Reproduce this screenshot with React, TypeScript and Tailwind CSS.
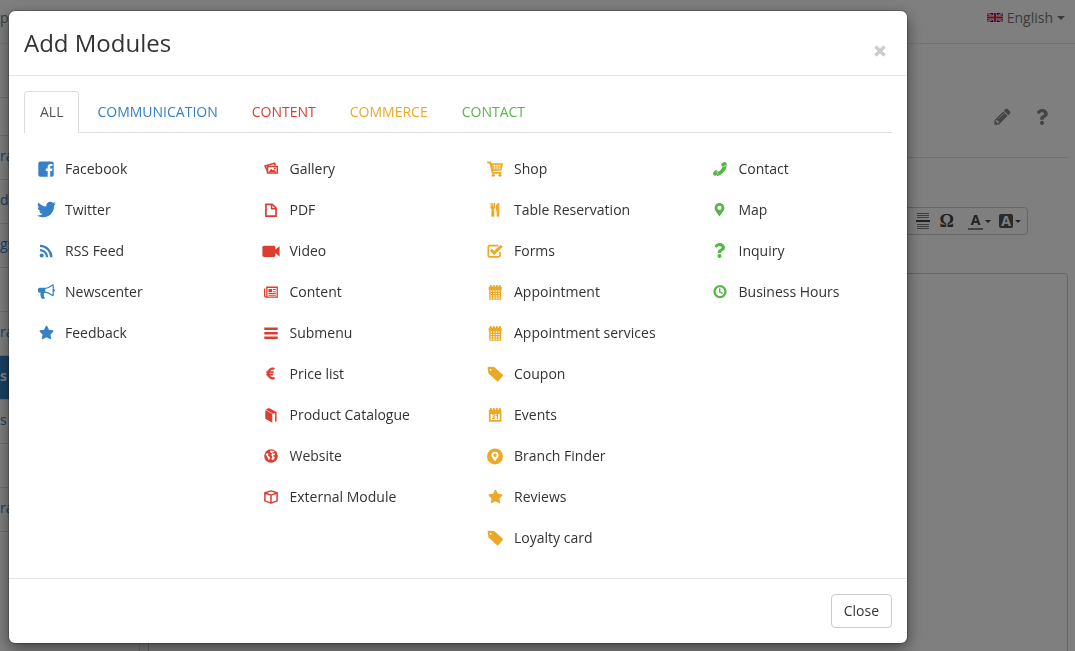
import type { ReactNode } from "react";
import { FaEuroSign, FaMapMarkerAlt, FaQuestion, FaStar, FaTwitter } from "react-icons/fa";

function Glyph({ children }: { children: ReactNode }) {
  return (
    <svg viewBox="0 0 20 20" className="h-5 w-5" fill="currentColor" aria-hidden="true">
      {children}
    </svg>
  );
}

const FacebookIcon = () => (
  <Glyph>
    <path d="M4.3 2.400h11.400a2 2 0 0 1 2 2v11.400a2 2 0 0 1-2 2h-1.500v-5.900h1.900l.3-2.300h-2.200V8.200c0-.7.3-1.100 1-1.100h1.300V5h-1.900c-1.900 0-2.900 1.100-2.900 2.900v1.700H9.800v2.300h1.900v5.900H4.300a2 2 0 0 1-2-2V4.400a2 2 0 0 1 2-2z" />
  </Glyph>
);

const RssIcon = () => (
  <Glyph>
    <circle cx="5.700" cy="14.600" r="2" />
    <path d="M4 9.100a7.200 7.200 0 0 1 7.100 7.200M4 4.900a11.400 11.400 0 0 1 11.300 11.400" fill="none" stroke="currentColor" strokeWidth="2.300" />
  </Glyph>
);

const BullhornIcon = () => (
  <svg viewBox="0 0 1792 1792" className="h-[17px] w-[17px]" fill="currentColor" aria-hidden="true">
    <path d="M1664 640q53 0 90.5 37.5t37.5 90.5-37.5 90.5-90.5 37.5v384q0 52-38 90t-90 38q-417-347-812-380-58 19-91 66t-31 100.5 40 92.5q-20 33-23 65.5t6 58 33.5 55 48 50 61.5 50.5q-29 58-111.5 83t-168.5 11.5-132-55.5q-7-23-29.5-87.5t-32-94.5-23-89-15-101 3.5-98.5 22-110.5h-122q-66 0-113-47t-47-113v-192q0-66 47-113t113-47h480q435 0 896-384 52 0 90 38t38 90v384zm-128 604v-954q-394 302-768 343v270q377 42 768 341z" />
  </svg>
);

const PencilIcon = () => (
  <svg viewBox="0 0 1792 1792" className="h-[19px] w-[19px]" fill="currentColor" aria-hidden="true">
    <path d="M491 1536l91-91-235-235-91 91v107h128v128h107zm523-928q0-22-22-22-10 0-17 7l-542 542q-7 7-7 17 0 22 22 22 10 0 17-7l542-542q7-7 7-17zm-54-192l416 416-832 832h-416v-416zm683 96q0 53-37 90l-166 166-416-416 166-165q36-38 90-38 53 0 91 38l235 234q37 39 37 91z" />
  </svg>
);

const GalleryIcon = () => (
  <Glyph>
    <path d="M3 6.500 14 3.200l1.200 3.300h-2l-.4-1.200-7.600 2.300L6.500 11v3.300z" />
    <path fillRule="evenodd" d="M5.800 6.700h11.200v8H5.800zM7.300 8.200v5.100h8.200V8.200z" />
    <path d="m7.500 13.200 2.700-3.500 1.700 1.900 1-1 2.500 2.600z" />
    <circle cx="13.800" cy="9.500" r="1" />
  </Glyph>
);

const FileIcon = () => (
  <Glyph>
    <path fillRule="evenodd" d="M4.100 3.500h7.400l4.400 4.300v9.100H4.100zm1.700 1.700v10h8.400V9.500h-4.400V5.200zm5.500.3v2.600h2.600z" />
  </Glyph>
);

const VideoIcon = () => (
  <Glyph>
    <rect x="1.400" y="4.700" width="13" height="11.200" rx="1.600" />
    <path d="M14 8.800 18.600 5.200v10.300L14 12z" />
  </Glyph>
);

const NewsIcon = () => (
  <Glyph>
    <path fillRule="evenodd" d="M5.200 4.600h11.700V15.700H4.700A1.700 1.700 0 0 1 3 14V6.600h1.300v7.300c0 .9.900.9.900 0zm1.300 1.300v8.500h9.100V5.900z" />
    <path d="M7.400 7h3.800v3.300H7.400zM12 7h2.800v1.100H12zM12 9.200h2.800v1.100H12zM7.400 11.100h7.400v1H7.400zM7.400 12.800h7.400v.9H7.400z" />
  </Glyph>
);

const MenuIcon = () => (
  <Glyph>
    <path d="M3.300 4.500h13.400v2.400H3.300zM3.300 9h13.400v2.400H3.300zM3.300 13.500h13.400v2.400H3.300z" />
  </Glyph>
);

const CatalogueIcon = () => (
  <Glyph>
    <path d="M4.300 5 11.300 8.800v9L4.300 13.700z" />
    <path d="M4.800 4.400 7.900 2.900l7.700 4v9.200l-1.500.9V8l-2.200.8z" />
  </Glyph>
);

const GlobeIcon = () => (
  <Glyph>
    <circle cx="10" cy="10" r="6.800" />
    <path d="m4.700 8.300 1.700-1.200 1.100 1.100-.4 1.500 1.600 1.100.3 2-1.300 1.300-.9-2.100zM9.300 4.600l4.200.3-.8 1.300h-1.500l.2 1.300h2.800l-.6 1.700h-1.500l.2 1.300 1.500.6-.6 2-1.800 1.200-1-1.300.9-2.500-1-1.400.8-1.700-1.900-1.200z" fill="#fff" />
  </Glyph>
);

const BoxIcon = () => (
  <Glyph>
    <path
      d="M10 3.900 16.100 5.700v8.200L10 16.100l-6.100-2.200V5.700zM4 6l6 2.100L16 6M10 8.100V16"
      fill="none"
      stroke="currentColor"
      strokeWidth="1.500"
      strokeLinejoin="round"
    />
  </Glyph>
);

const CartIcon = () => (
  <Glyph>
    <path d="M2.200 2.500h3.500l.8 1.700H18.200l-1.800 7.300-8.300.5.300 1h8.200v1.800H6.900L4.500 4.400H2.200z" />
    <circle cx="8.200" cy="16.200" r="1.500" />
    <circle cx="15" cy="16.200" r="1.500" />
    <path d="M7.200 6.700h9.300M7.600 9h8.300M9.500 5.500v5M12 5.500v5M14.400 5.500v5" stroke="#fff" strokeWidth=".6" />
  </Glyph>
);

const CutleryIcon = () => (
  <Glyph>
    <path d="M5.500 3h1.200v3.200h.5V3h1.100v3.200h.5V3H10v4.400c0 .9-.4 1.500-1 1.800l.4 6.300c0 .9-.6 1.400-1.600 1.400s-1.600-.5-1.600-1.400l.4-6.300c-.7-.3-1.100-.9-1.100-1.800zM10.900 6.300C10.900 4.300 12.200 3 14.300 3v12.500c0 .9-.5 1.400-1.300 1.400s-1.400-.5-1.400-1.400v-5h-.7z" />
  </Glyph>
);

const CheckIcon = () => (
  <Glyph>
    <path d="M15 11v3.500a1.300 1.300 0 0 1-1.300 1.300H4.600a1.300 1.300 0 0 1-1.300-1.300V5.900a1.300 1.300 0 0 1 1.300-1.300h8.800" fill="none" stroke="currentColor" strokeWidth="1.700" />
    <path d="m5.900 8.700 3.300 3.300 7.400-7.200" fill="none" stroke="currentColor" strokeWidth="3" />
  </Glyph>
);

const CalendarIcon = () => (
  <Glyph>
    <path d="M3.700 4.700h13v3.200h-13zM4.200 7h12v10.700h-12z" />
    <path d="M4.700 4a1.100 1.100 0 0 1 2.200 0v1.200H4.700zM7.700 4a1.100 1.100 0 0 1 2.200 0v1.200H7.700zM10.700 4a1.100 1.100 0 0 1 2.200 0v1.200h-2.200zM13.700 4a1.100 1.100 0 0 1 2.200 0v1.200h-2.200z" />
    <path
      d="M5.500 9.200h9.500M5.500 11.500h9.500M5.500 13.800h9.500M5.500 16.200h9.500"
      stroke="#fff"
      strokeWidth="1.200"
      strokeDasharray="1.500 1.100"
    />
  </Glyph>
);

const EventsIcon = () => (
  <Glyph>
    <path fillRule="evenodd" d="M3.900 4.700h12.500v12H3.900zm1.700 4.400v5.900h9.100V9.100z" />
    <path d="M4.800 3.800a1 1 0 0 1 2 0v1.400h-2zM7.800 3.800a1 1 0 0 1 2 0v1.400h-2zM10.800 3.800a1 1 0 0 1 2 0v1.400h-2zM13.800 3.800a1 1 0 0 1 2 0v1.400h-2z" />
    <text x="10.200" y="14.300" textAnchor="middle" fontSize="6" fontWeight="800">
      31
    </text>
  </Glyph>
);

const TagIcon = () => (
  <Glyph>
    <path fillRule="evenodd" d="M2.600 3.900c0-.8.5-1.200 1.200-1.200l5.500.4 8.300 7.500c.5.4.5 1 .1 1.500l-4.200 5c-.4.500-1 .5-1.500.1L3.500 9.400zm3 1a.9.9 0 1 0 0 1.800.9.9 0 0 0 0-1.800z" />
  </Glyph>
);

const BranchIcon = () => (
  <Glyph>
    <circle cx="10" cy="10.400" r="8" />
    <path fillRule="evenodd" d="M10 5.700a3.500 3.500 0 0 1 3.500 3.500c0 2-2.100 3.700-3.500 6.100-1.400-2.400-3.500-4.100-3.500-6.100A3.500 3.500 0 0 1 10 5.700zm0 1.800a1.700 1.700 0 1 0 0 3.400 1.700 1.700 0 0 0 0-3.400z" fill="#fff" />
  </Glyph>
);

const PhoneIcon = () => (
  <Glyph>
    <path d="M14.700 6.500c-.2 4-3.700 7.800-8 8.700" fill="none" stroke="currentColor" strokeWidth="4" />
    <ellipse cx="14" cy="5.400" rx="2.800" ry="2.100" transform="rotate(-25 14 5.400)" />
    <ellipse cx="5.500" cy="13.900" rx="2.800" ry="2.100" transform="rotate(115 5.500 13.900)" />
    <path d="m12.400 8 3.600-1.500M6.800 12l1.300 3.300" stroke="#fff" strokeWidth=".5" />
  </Glyph>
);

const ClockIcon = () => (
  <Glyph>
    <circle cx="10" cy="9.600" r="5.500" fill="none" stroke="currentColor" strokeWidth="2.300" />
    <path d="M9.700 6.200v3.900l3 1.200" fill="none" stroke="currentColor" strokeWidth="1.400" />
  </Glyph>
);

const CloseIcon = () => (
  <svg viewBox="0 0 12 12" className="h-3 w-3" aria-hidden="true">
    <path d="m1.500 1.500 9 9M10.500 1.500l-9 9" stroke="currentColor" strokeWidth="3.200" />
  </svg>
);

const Caret = ({ className }: { className: string }) => (
  <svg viewBox="0 0 8 4" className={className} fill="currentColor" aria-hidden="true">
    <path d="M0 0h8L4 4z" />
  </svg>
);

const FlagIcon = () => (
  <svg viewBox="0 0 16 9" className="h-[9px] w-4" aria-hidden="true">
    <path fill="#1a1a90" d="M0 0h16v9H0z" />
    <path d="m0 0 16 9M16 0 0 9" stroke="#fff" strokeWidth="2" />
    <path d="m0 0 16 9M16 0 0 9" stroke="#e01838" strokeWidth=".7" />
    <path d="M8 0v9M0 4.500h16" stroke="#fff" strokeWidth="3.400" />
    <path d="M8 0v9M0 4.500h16" stroke="#e01838" strokeWidth="2" />
  </svg>
);

const tabs = [
  { name: "COMMUNICATION", color: "text-[#3580c6]" },
  { name: "CONTENT", color: "text-[#dc3d31]" },
  { name: "COMMERCE", color: "text-[#eca927]" },
  { name: "CONTACT", color: "text-[#56b647]" },
];

const columns = [
  {
    color: "text-[#3580c6]",
    modules: [
      { name: "Facebook", icon: <FacebookIcon /> },
      { name: "Twitter", icon: <FaTwitter size={19} /> },
      { name: "RSS Feed", icon: <RssIcon /> },
      { name: "Newscenter", icon: <BullhornIcon /> },
      { name: "Feedback", icon: <FaStar size={15} /> },
    ],
  },
  {
    color: "text-[#dc3d31]",
    modules: [
      { name: "Gallery", icon: <GalleryIcon /> },
      { name: "PDF", icon: <FileIcon /> },
      { name: "Video", icon: <VideoIcon /> },
      { name: "Content", icon: <NewsIcon /> },
      { name: "Submenu", icon: <MenuIcon /> },
      { name: "Price list", icon: <FaEuroSign size={13} stroke="currentColor" strokeWidth={24} /> },
      { name: "Product Catalogue", icon: <CatalogueIcon /> },
      { name: "Website", icon: <GlobeIcon /> },
      { name: "External Module", icon: <BoxIcon /> },
    ],
  },
  {
    color: "text-[#eca927]",
    modules: [
      { name: "Shop", icon: <CartIcon /> },
      { name: "Table Reservation", icon: <CutleryIcon /> },
      { name: "Forms", icon: <CheckIcon /> },
      { name: "Appointment", icon: <CalendarIcon /> },
      { name: "Appointment services", icon: <CalendarIcon /> },
      { name: "Coupon", icon: <TagIcon /> },
      { name: "Events", icon: <EventsIcon /> },
      { name: "Branch Finder", icon: <BranchIcon /> },
      { name: "Reviews", icon: <FaStar size={15} /> },
      { name: "Loyalty card", icon: <TagIcon /> },
    ],
  },
  {
    color: "text-[#56b647]",
    modules: [
      { name: "Contact", icon: <PhoneIcon /> },
      { name: "Map", icon: <FaMapMarkerAlt size={13} /> },
      { name: "Inquiry", icon: <FaQuestion size={15} /> },
      { name: "Business Hours", icon: <ClockIcon /> },
    ],
  },
];

const sidebarItems = ["ra", "d", "gs", "", "ra", "s", "s", "", "ra"];

function Page() {
  return (
    <div className="flex h-screen flex-col overflow-hidden bg-white text-[#777]">
      <header className="flex h-11 shrink-0 items-center justify-between border-b border-[#e7e7e7] pr-2.5 pb-2">
        <span>pp</span>
        <button type="button" className="flex items-center gap-1">
          <FlagIcon />
          English
          <Caret className="h-1 w-2" />
        </button>
      </header>

      <div className="flex flex-1">
        <aside className="w-[140px] border-r border-[#ddd]">
          <div className="h-[54px] border-b border-[#ddd]"></div>
          <div className="h-[38px] border-b border-[#ddd]"></div>
          <nav>
            {sidebarItems.map((item, i) => (
              <a
                key={i}
                href="#"
                className={`flex h-11 items-center border-b border-[#ddd] pb-1 ${
                  i === 5 ? "bg-[#3580c6] font-bold text-white" : "text-[#3580c6]"
                }`}
              >
                {item}
              </a>
            ))}
          </nav>
        </aside>

        <main className="mr-[7px] ml-2 flex flex-1 flex-col">
          <div className="flex h-[114px] items-center justify-end gap-[22px] border-b border-[#e0e0e0] pt-8 pr-[18px] text-[#888]">
            <button type="button" aria-label="Edit">
              <PencilIcon />
            </button>
            <button type="button" aria-label="Help">
              <FaQuestion size={16} />
            </button>
          </div>

          {/* Editor toolbar */}
          <div className="mt-[49px] mr-10 flex h-7 items-center justify-end rounded border border-[#ccc] pr-1.5 text-[#444]">
            <button type="button" aria-label="Horizontal line" className="mr-2.5">
              <svg viewBox="0 0 14 17" className="h-[17px] w-3.5" fill="currentColor">
                <path d="M0 7h14v2H0z" />
                <path d="M1 0h12v1H1zM1 2h12v1H1zM1 4h12v1H1zM1 11h12v1H1zM1 13h12v1H1zM1 15h12v1H1z" opacity=".7" />
              </svg>
            </button>
            <button type="button" className="mr-3.5 font-['Liberation_Serif',serif] text-lg leading-5 font-bold">
              Ω
            </button>
            <button type="button" className="mr-2 flex items-center gap-0.5 font-bold">
              <span className="w-[15px] border-b-2 border-[#888] text-center leading-4">A</span>
              <Caret className="h-[3px] w-1.5" />
            </button>
            <button type="button" className="flex items-center gap-0.5 font-bold">
              <span className="w-3.5 rounded-xs bg-[#555] text-center leading-[14px] text-white">A</span>
              <Caret className="h-[3px] w-1.5" />
            </button>
          </div>

          <div className="mt-[38px] flex-1 rounded-t border border-b-0 border-[#ccc]"></div>
        </main>
      </div>
    </div>
  );
}

export default function App() {
  return (
    <div className="font-['Open_Sans','Noto_Sans',sans-serif] text-sm text-[#333]">
      <Page />

      <div className="fixed inset-0 bg-black/50">
        <div
          role="dialog"
          aria-modal="true"
          aria-labelledby="modal-title"
          className="mt-[11px] mr-[168px] ml-[9px] rounded-md bg-white shadow-[0_5px_15px_rgba(0,0,0,0.5),0_0_0_1px_rgba(0,0,0,0.2)]"
        >
          <div className="flex items-end justify-between border-b border-[#e5e5e5] p-[15px]">
            <h4 id="modal-title" className="text-2xl leading-[34px]">
              Add Modules
            </h4>
            <button type="button" aria-label="Close dialog" className="p-1.5 pb-[3px] text-[#ccc]">
              <CloseIcon />
            </button>
          </div>

          <div className="px-[15px] pt-[15px] pb-5">
            <div role="tablist" className="flex gap-0.5 border-b border-[#ddd]">
              <button
                type="button"
                role="tab"
                aria-selected="true"
                className="-mb-px rounded-t border border-b-0 border-[#ddd] bg-white px-[15px] pt-2.5 pb-[11px] leading-5 text-[#555]"
              >
                ALL
              </button>
              {tabs.map((tab) => (
                <button
                  key={tab.name}
                  type="button"
                  role="tab"
                  aria-selected="false"
                  className={`px-4 leading-5 ${tab.color}`}
                >
                  {tab.name}
                </button>
              ))}
            </div>

            <div className="-mx-[15px] grid grid-cols-4 pt-[15px]">
              {columns.map((column, i) => (
                <ul key={i} className="pl-[27px]">
                  {column.modules.map((module) => (
                    <li key={module.name}>
                      <a href="#" className="flex h-[41px] items-center gap-[9px] whitespace-nowrap">
                        <span className={`flex h-5 w-5 shrink-0 items-center justify-center ${column.color}`}>
                          {module.icon}
                        </span>
                        {module.name}
                      </a>
                    </li>
                  ))}
                </ul>
              ))}
            </div>
          </div>

          <div className="flex justify-end border-t border-[#e5e5e5] p-[15px]">
            <button type="button" className="rounded border border-[#ccc] bg-white px-3 py-1.5 leading-5">
              Close
            </button>
          </div>
        </div>
      </div>
    </div>
  );
}
